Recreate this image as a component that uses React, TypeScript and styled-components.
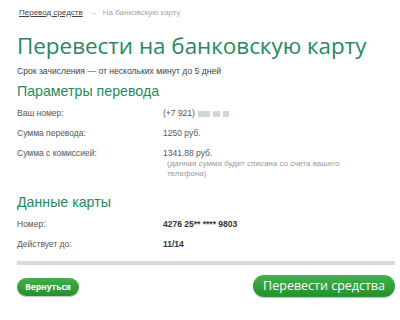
import React from "react";
import styled, { createGlobalStyle } from "styled-components";

const Global = createGlobalStyle`
  html, body { margin: 0; padding: 0; background: #ffffff; }
  body { font-family: "Liberation Sans", Arial, sans-serif; width: 400px; height: 320px; overflow: hidden; }
`;

const Page = styled.div`
  width: 400px;
  height: 320px;
  box-sizing: border-box;
  padding: 7px 5px 0 17px;
  display: flex;
  flex-direction: column;
`;

const Crumbs = styled.div`
  display: flex;
  align-items: center;
  gap: 6px;
  font-size: 8px;
  color: #a5a5a5;
  padding-left: 2px;
  height: 10px;
`;

const CrumbLink = styled.a`
  color: #444;
  text-decoration: underline;
`;

const Title = styled.h1`
  margin: 14px 0 0 0;
  font-family: "Open Sans", sans-serif;
  font-weight: 400;
  font-size: 22.4px;
  line-height: 30px;
  color: #27895d;
  white-space: nowrap;
`;

const Sub = styled.div`
  margin-top: 4px;
  font-size: 8.6px;
  line-height: 12px;
  color: #444;
`;

const Section = styled.h2<{ $gap?: number }>`
  margin: ${(p) => p.$gap ?? 5}px 0 0 0;
  font-family: "Liberation Sans", Arial, sans-serif;
  font-weight: 400;
  font-size: 14.2px;
  line-height: 18px;
  color: #27895d;
`;

const Rows = styled.div<{ $top: number }>`
  display: grid;
  grid-template-columns: 146px 1fr;
  row-gap: 8px;
  margin-top: ${(p) => p.$top}px;
  font-size: 8.5px;
  line-height: 12px;
  color: #555;
`;

const Value = styled.div<{ $bold?: boolean }>`
  color: ${(p) => (p.$bold ? "#333" : "#555")};
  font-weight: ${(p) => (p.$bold ? 700 : 400)};
`;

const Note = styled.div`
  padding-left: 4px;
  font-size: 8px;
  line-height: 10px;
  color: #999;
  width: 190px;
`;

const Blur = styled.span<{ $w: number }>`
  display: inline-block;
  vertical-align: middle;
  width: ${(p) => p.$w}px;
  height: 6px;
  margin-left: 3px;
  background: #d3d6d6;
`;

const Divider = styled.div`
  margin-top: 11px;
  height: 4px;
  background: #d9d9d9;
`;

const Buttons = styled.div`
  display: flex;
  justify-content: space-between;
  align-items: center;
  margin-top: 10px;
`;

const GreenButton = styled.button<{ $big?: boolean }>`
  border: none;
  border-radius: 999px;
  color: #fff;
  background: linear-gradient(#45b04a, #23902e);
  box-shadow: 0 1px 1px rgba(0, 0, 0, 0.25);
  font-family: "Open Sans", sans-serif;
  font-size: ${(p) => (p.$big ? "12.5px" : "8.5px")};
  font-weight: ${(p) => (p.$big ? 500 : 700)};
  height: ${(p) => (p.$big ? "22px" : "18px")};
  padding: ${(p) => (p.$big ? "0 10px" : "0 8px")};
  line-height: 1;
  margin-top: ${(p) => (p.$big ? "0" : "2px")};
`;

export default function App() {
  return (
    <>
      <Global />
      <Page>
        <Crumbs>
          <CrumbLink>Перевод средств</CrumbLink>
          <span>→</span>
          <span>На банковскую карту</span>
        </Crumbs>
        <Title>Перевести на банковскую карту</Title>
        <Sub>Срок зачисления — от нескольких минут до 5 дней</Sub>
        <Section>Параметры перевода</Section>
        <Rows $top={7}>
          <div>Ваш номер:</div>
          <Value>
            (+7 921)
            <Blur $w={12} />
            <Blur $w={7} />
            <Blur $w={6} />
          </Value>
          <div>Сумма перевода:</div>
          <Value>1250 руб.</Value>
          <div>Сумма с комиссией:</div>
          <div>
            <Value>1341.88 руб.</Value>
            <Note>(данная сумма будет списана со счета вашего телефона)</Note>
          </div>
        </Rows>
        <Section $gap={14}>Данные карты</Section>
        <Rows $top={7}>
          <div>Номер:</div>
          <Value $bold>4276 25** **** 9803</Value>
          <div>Действует до:</div>
          <Value $bold>11/14</Value>
        </Rows>
        <Divider />
        <Buttons>
          <GreenButton>Вернуться</GreenButton>
          <GreenButton $big>Перевести средства</GreenButton>
        </Buttons>
      </Page>
    </>
  );
}
